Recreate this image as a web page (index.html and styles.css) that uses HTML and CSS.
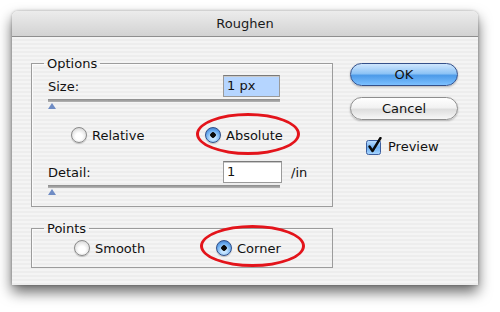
FILE: index.html
```html
<!DOCTYPE html>
<html lang="en">
<head>
    <meta charset="UTF-8">
    <title>Roughen</title>
    <link rel="stylesheet" href="styles.css">
</head>
<body>

<div class="window">
    <div class="title-bar">Roughen</div>
    <div class="window-body">
        <div class="left-column">
            <fieldset class="group options-group">
                <legend>Options</legend>
                <div class="field-row">
                    <span class="field-label">Size:</span>
                    <span class="text-box selected">1 px</span>
                </div>
                <div class="slider"><span class="thumb"></span></div>
                <div class="radio-row">
                    <span class="option relative-option"><span class="radio"></span>Relative</span>
                    <span class="option marked absolute-mark"><span class="radio checked"></span>Absolute</span>
                </div>
                <div class="field-row detail-row">
                    <span class="field-label">Detail:</span>
                    <span class="text-box wide">1</span>
                    <span class="unit">/in</span>
                </div>
                <div class="slider"><span class="thumb"></span></div>
            </fieldset>

            <fieldset class="group points-group">
                <legend>Points</legend>
                <div class="radio-row">
                    <span class="option smooth-option"><span class="radio"></span>Smooth</span>
                    <span class="option marked corner-mark"><span class="radio checked"></span>Corner</span>
                </div>
            </fieldset>
        </div>

        <div class="right-column">
            <button class="aqua-button default">OK</button>
            <button class="aqua-button">Cancel</button>
            <label class="check-row">
                <svg class="checkbox" width="16" height="18" viewBox="0 0 16 18">
                    <defs>
                        <linearGradient id="boxFill" x1="0" y1="0" x2="0" y2="1">
                            <stop offset="0" stop-color="#bfe0ff"/>
                            <stop offset="0.5" stop-color="#6fb0f2"/>
                            <stop offset="1" stop-color="#a9d6ff"/>
                        </linearGradient>
                    </defs>
                    <rect x="0.5" y="3.5" width="14" height="14" rx="2" fill="url(#boxFill)" stroke="#3d5f9e"/>
                    <path d="M3.5 9.5 L6.5 14 L14.5 1" fill="none" stroke="#0a0a0a" stroke-width="2.4" stroke-linecap="round" stroke-linejoin="round"/>
                </svg>
                Preview
            </label>
        </div>
    </div>
</div>

</body>
</html>
```

FILE: styles.css
```css
html, body {
    min-height: 312px;
}
body {
    margin: 0;
    padding-bottom: 20px;
    box-sizing: border-box;
    background-color: #ffffff;
    font-family: 'DejaVu Sans', 'Liberation Sans', sans-serif;
    font-size: 13px;
    color: #111;
}
.window {
    margin: 11px 0 0 12px;
    width: 466px;
    height: 274px;
    border-radius: 6px 6px 0 0;
    background: repeating-linear-gradient(#ededed 0 2px, #f4f4f4 2px 4px);
    box-shadow: 0 7px 14px rgba(0, 0, 0, 0.6), 0 0 3px rgba(0, 0, 0, 0.3);
    overflow: hidden;
}
.title-bar {
    height: 25px;
    line-height: 25px;
    text-align: center;
    color: #1a1a1a;
    background: linear-gradient(#ececec, #d2d2d2);
    border-bottom: 1px solid #8e8e8e;
}
.window-body {
    display: flex;
    gap: 17px;
    padding: 19px 0 0 19px;
}
.left-column {
    width: 302px;
}
.group {
    margin: 0;
    border: 1px solid #9c9c9c;
    box-shadow: inset 1px 1px 0 #fbfbfb;
    padding: 4px 0 8px 16px;
}
.group legend {
    margin-left: -4px;
    padding: 0 3px;
    line-height: 15px;
}
.points-group {
    margin-top: 14px;
    padding-bottom: 11px;
}
.field-row {
    display: flex;
    align-items: center;
    height: 22px;
}
.field-label {
    width: 175px;
}
.text-box {
    box-sizing: border-box;
    width: 57px;
    height: 22px;
    line-height: 20px;
    padding-left: 3px;
    background-color: #fff;
    border: 1px solid #9a9a9a;
    border-top-color: #7a7a7a;
    box-shadow: inset 0 1px 0 #c9c9c9;
}
.text-box.selected {
    background-color: #b5d5ff;
}
.text-box.wide {
    width: 59px;
}
.unit {
    margin-left: 9px;
}
.detail-row {
    margin-top: 18px;
}
.slider {
    position: relative;
    width: 232px;
    height: 13px;
    margin-top: 2px;
    background: linear-gradient(#8a8a8a, #b4b4b4) top / 100% 3px no-repeat;
}
.thumb {
    position: absolute;
    left: 0;
    top: 4px;
    width: 0;
    height: 0;
    border-left: 4px solid transparent;
    border-right: 4px solid transparent;
    border-bottom: 6px solid #6f8cc4;
}
.radio-row {
    display: flex;
    align-items: center;
    height: 16px;
    margin-top: 15px;
}
.points-group .radio-row {
    margin-top: 0;
}
.option {
    display: flex;
    align-items: center;
    gap: 5px;
    position: relative;
}
.relative-option {
    margin-left: 23px;
    width: 134px;
}
.smooth-option {
    margin-left: 26px;
    width: 142px;
}
.radio {
    box-sizing: border-box;
    width: 16px;
    height: 16px;
    border-radius: 50%;
    border: 1px solid #8a8a8a;
    background: radial-gradient(circle at 50% 60%, #ffffff 30%, #e4e4e4 65%, #b9b9b9 100%);
    box-shadow: 0 1px 1px rgba(0, 0, 0, 0.2);
}
.radio.checked {
    border-color: #2f4f8a;
    background:
        radial-gradient(circle, #0a0a0a 0 2.5px, transparent 3px),
        radial-gradient(circle at 50% 70%, #c4e4ff 20%, #69abef 60%, #2d64b8 100%);
}
.marked::after {
    content: "";
    position: absolute;
    box-sizing: border-box;
    height: 42px;
    border: 3px solid #e3141b;
    border-radius: 50%;
}
.absolute-mark::after {
    left: -9px;
    top: -14px;
    width: 104px;
}
.corner-mark::after {
    left: -16px;
    top: -15px;
    width: 105px;
}
.right-column {
    display: flex;
    flex-direction: column;
    padding-top: 7px;
}
.aqua-button {
    width: 108px;
    height: 23px;
    padding: 0;
    font-family: inherit;
    font-size: 13px;
    color: #111;
    border: 1px solid #8e8e8e;
    border-radius: 12px;
    background: linear-gradient(#ffffff 0%, #f2f2f2 45%, #dedede 55%, #f7f7f7 100%);
    box-shadow: 0 1px 2px rgba(0, 0, 0, 0.25);
}
.aqua-button + .aqua-button {
    margin-top: 11px;
}
.aqua-button.default {
    border-color: #34508a;
    background: linear-gradient(#cfe6fd 0%, #8ec4f6 45%, #4d9be9 55%, #7cc0ff 100%);
}
.check-row {
    display: flex;
    align-items: center;
    gap: 6px;
    margin: 17px 0 0 16px;
}
```
